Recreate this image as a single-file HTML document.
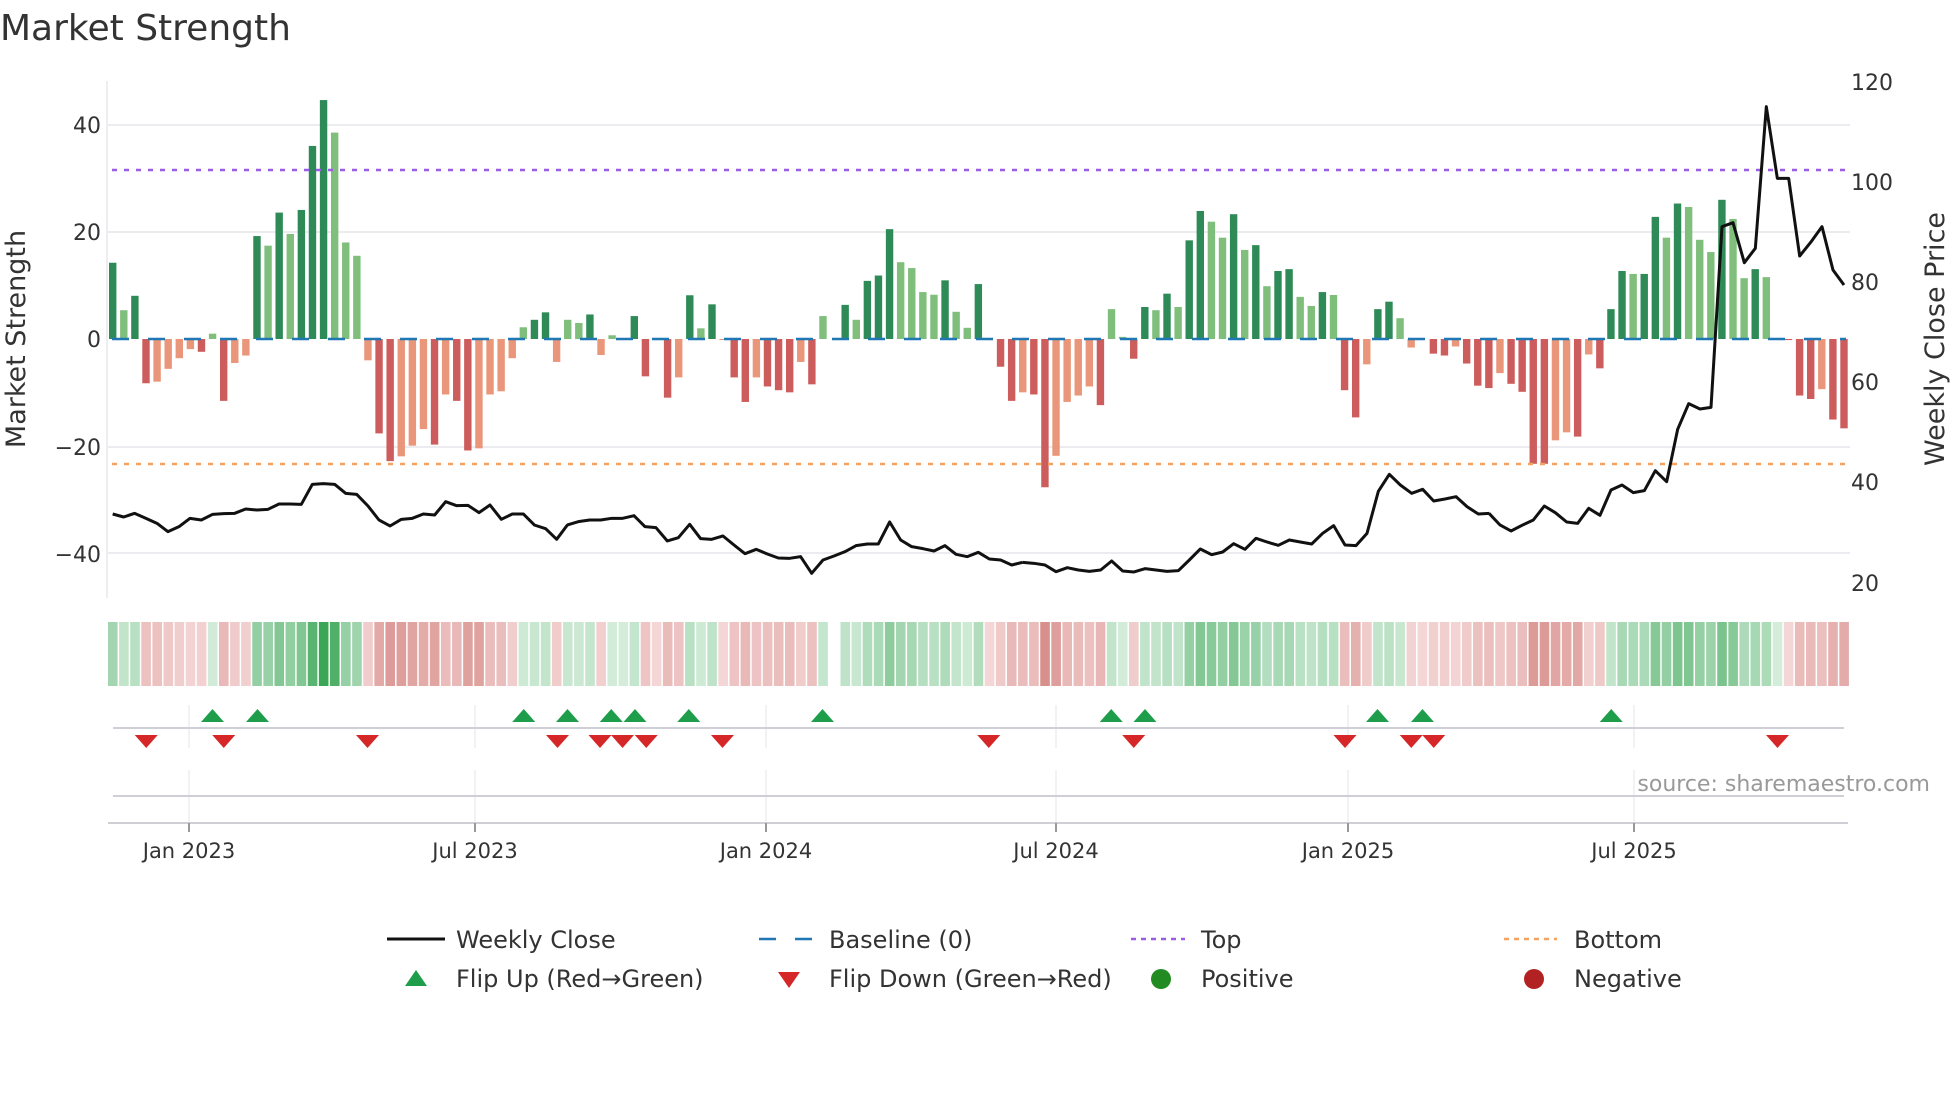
<!DOCTYPE html>
<html><head><meta charset="utf-8">
<style>
html,body{margin:0;padding:0;background:#fff;}
svg{display:block;font-family:"DejaVu Sans","Liberation Sans",sans-serif;}
</style></head>
<body>
<svg id="s" width="1960" height="1102" viewBox="0 0 1960 1102" xmlns="http://www.w3.org/2000/svg">
<rect width="1960" height="1102" fill="#fff"/>
<text x="0" y="40" font-size="36" fill="#333">Market Strength</text>

<g stroke="#ececf0" stroke-width="2">
<line x1="108" y1="125" x2="1850" y2="125"/>
<line x1="108" y1="232" x2="1850" y2="232"/>
<line x1="108" y1="447" x2="1850" y2="447"/>
<line x1="108" y1="553" x2="1850" y2="553"/>
</g>
<line x1="107" y1="81" x2="107" y2="598" stroke="#eeeef2" stroke-width="2"/>

<g font-size="22" fill="#333" text-anchor="end">
<text x="101" y="133">40</text>
<text x="101" y="240">20</text>
<text x="101" y="347">0</text>
<text x="101" y="455">−20</text>
<text x="101" y="562">−40</text>
</g>
<g font-size="22" fill="#333">
<text x="1851" y="90">120</text>
<text x="1851" y="190">100</text>
<text x="1851" y="290">80</text>
<text x="1851" y="390">60</text>
<text x="1851" y="490">40</text>
<text x="1851" y="591">20</text>
</g>
<text transform="translate(25,339) rotate(-90)" font-size="27" fill="#333" text-anchor="middle">Market Strength</text>
<text transform="translate(1944,339) rotate(-90)" font-size="27" fill="#333" text-anchor="middle">Weekly Close Price</text>

<g id="bars"></g>
<line x1="112" y1="339" x2="1846" y2="339" stroke="#1f77b4" stroke-width="2.5" stroke-dasharray="17 19"/>
<line x1="112" y1="170" x2="1846" y2="170" stroke="#9b5de5" stroke-width="2.5" stroke-dasharray="5 7"/>
<line x1="112" y1="464" x2="1846" y2="464" stroke="#f4a261" stroke-width="2.5" stroke-dasharray="5 7"/>

<g fill="none" stroke="#111" stroke-width="3" stroke-linejoin="round">
<polyline vector-effect="non-scaling-stroke" transform="translate(100,80) scale(0.33333)" points="38,1302 71,1311 104,1300 138,1315 171,1330 204,1355 237,1340 270,1315 304,1320 338,1303 371,1301 404,1300 437,1287 471,1290 504,1288 537,1272 570,1272 604,1273 637,1213 670,1211 704,1213 737,1240 770,1243 804,1278 837,1320 870,1338 904,1318 937,1315 970,1302 1004,1305 1037,1265 1070,1277 1104,1276 1137,1298 1170,1275 1204,1318 1237,1302 1270,1302 1303,1335 1337,1346 1370,1378 1403,1334"/>
<polyline vector-effect="non-scaling-stroke" transform="translate(560,80) scale(0.33333)" points="22,1335 55,1325 89,1320 122,1320 155,1315 188,1315 222,1307 255,1340 288,1343 322,1383 355,1373 389,1333 422,1376 455,1378 489,1368 522,1395 555,1421 589,1408 622,1422 655,1434 689,1435 722,1430 755,1480 789,1440 822,1428 855,1415 888,1397 922,1392 955,1392 989,1326 1022,1380 1055,1400 1089,1406 1122,1413 1155,1397 1188,1423 1222,1430 1255,1417 1288,1437 1322,1440 1355,1455 1388,1447"/>
<polyline vector-effect="non-scaling-stroke" transform="translate(1020,80) scale(0.33333)" points="8,1447 42,1450 75,1455 108,1475 142,1463 175,1470 208,1474 242,1470 275,1443 308,1473 342,1476 375,1466 408,1470 441,1474 475,1472 508,1440 541,1407 575,1424 608,1416 641,1391 675,1408 708,1375 741,1386 775,1396 808,1380 841,1386 875,1392 908,1360 941,1337 975,1395 1008,1397 1041,1360 1075,1234 1108,1183 1141,1215 1175,1240 1208,1228 1241,1263 1275,1257 1308,1250 1341,1280 1375,1302 1408,1300"/>
<polyline vector-effect="non-scaling-stroke" transform="translate(1480,80) scale(0.33333)" points="27,1300 60,1335 93,1353 126,1336 160,1320 193,1278 226,1298 260,1326 293,1330 326,1285 360,1306 393,1230 426,1215 460,1238 493,1232 526,1172 560,1205 593,1048 626,971 660,987 693,982 726,440 759,428 793,548 826,505 859,80 892,295 926,295 959,528 992,487 1026,440 1059,570 1092,615"/>
</g>

<g id="heat"></g>

<g stroke="#ececf2" stroke-width="1.5">
<line x1="189" y1="705" x2="189" y2="748"/><line x1="475" y1="705" x2="475" y2="748"/><line x1="766" y1="705" x2="766" y2="748"/><line x1="1056" y1="705" x2="1056" y2="748"/><line x1="1348" y1="705" x2="1348" y2="748"/><line x1="1634" y1="705" x2="1634" y2="748"/>
<line x1="189" y1="770" x2="189" y2="822"/><line x1="475" y1="770" x2="475" y2="822"/><line x1="766" y1="770" x2="766" y2="822"/><line x1="1056" y1="770" x2="1056" y2="822"/><line x1="1348" y1="770" x2="1348" y2="822"/><line x1="1634" y1="770" x2="1634" y2="822"/>
</g>
<line x1="113" y1="728" x2="1844" y2="728" stroke="#cfcfd6" stroke-width="2"/>
<line x1="113" y1="796" x2="1844" y2="796" stroke="#cfcfd6" stroke-width="2"/>
<line x1="108" y1="823" x2="1848" y2="823" stroke="#cfcfd6" stroke-width="2"/>
<g stroke="#999" stroke-width="2">
<line x1="189" y1="823" x2="189" y2="832"/><line x1="475" y1="823" x2="475" y2="832"/><line x1="766" y1="823" x2="766" y2="832"/><line x1="1056" y1="823" x2="1056" y2="832"/><line x1="1348" y1="823" x2="1348" y2="832"/><line x1="1634" y1="823" x2="1634" y2="832"/>
</g>
<g id="marks"></g>
<text x="1930" y="791" font-size="22" fill="#999" text-anchor="end">source: sharemaestro.com</text>

<g font-size="21" fill="#333" text-anchor="middle">
<text x="189" y="858">Jan 2023</text><text x="475" y="858">Jul 2023</text><text x="766" y="858">Jan 2024</text><text x="1056" y="858">Jul 2024</text><text x="1348" y="858">Jan 2025</text><text x="1634" y="858">Jul 2025</text>
</g>

<line x1="387" y1="939" x2="445" y2="939" stroke="#111" stroke-width="3"/>
<line x1="759" y1="939" x2="812" y2="939" stroke="#1f77b4" stroke-width="2.5" stroke-dasharray="17 19"/>
<line x1="1131" y1="939" x2="1185" y2="939" stroke="#9b5de5" stroke-width="2.5" stroke-dasharray="5 5"/>
<line x1="1504" y1="939" x2="1557" y2="939" stroke="#f4a261" stroke-width="2.5" stroke-dasharray="5 5"/>
<polygon points="405,986 427,986 416,970" fill="#1e9e4a"/>
<polygon points="778,972 800,972 789,988" fill="#d62728"/>
<circle cx="1161" cy="979" r="10" fill="#228b22"/>
<circle cx="1534" cy="979" r="10" fill="#b22222"/>
<g font-size="24" fill="#333">
<text x="456" y="948">Weekly Close</text>
<text x="829" y="948">Baseline (0)</text>
<text x="1201" y="948">Top</text>
<text x="1574" y="948">Bottom</text>
<text x="456" y="987">Flip Up (Red→Green)</text>
<text x="829" y="987">Flip Down (Green→Red)</text>
<text x="1201" y="987">Positive</text>
<text x="1574" y="987">Negative</text>
</g>
</svg>
<script>
(function(){
var V=[14.3,5.4,8.1,-8.3,-8,-5.6,-3.6,-1.9,-2.4,1,-11.6,-4.5,-3.1,19.3,17.5,23.7,19.7,24.2,36.2,44.8,38.7,18.1,15.6,-4,-17.7,-22.9,-22,-20,-16.9,-19.8,-10.4,-11.6,-20.9,-20.5,-10.4,-9.8,-3.6,2.2,3.6,5,-4.3,3.6,3,4.6,-3,0.7,0,4.3,-7,0,-11,-7.2,8.2,2,6.5,-0.2,-7.2,-11.8,-7.2,-8.9,-9.6,-10,-4.3,-8.5,4.3,0,6.4,3.6,10.9,11.9,20.6,14.4,13.3,8.8,8.3,11,5.1,2.1,10.3,0,-5.2,-11.6,-10,-10.4,-27.8,-21.9,-11.8,-10.6,-8.9,-12.4,5.6,0.4,-3.7,6,5.4,8.5,6,18.5,24,22,19,23.4,16.7,17.6,9.9,12.75,13.1,7.9,6.2,8.8,8.25,-9.6,-14.7,-4.75,5.6,7,3.9,-1.6,0,-2.75,-3.1,-1.4,-4.6,-8.75,-9.2,-6.4,-8.4,-9.9,-23.4,-23.4,-19,-17.5,-18.3,-2.9,-5.5,5.6,12.75,12.2,12.2,22.9,19,25.4,24.75,18.6,16.3,26.1,22.5,11.4,13.1,11.6,0,-0.2,-10.6,-11.25,-9.4,-15.1,-16.75];
var N=V.length,x0=112.7,x1=1844,dx=(x1-x0)/(N-1),k=16/3,ns="http://www.w3.org/2000/svg";
var bars=document.getElementById('bars'),heat=document.getElementById('heat'),marks=document.getElementById('marks');
function el(t,a,p){var e=document.createElementNS(ns,t);for(var q in a)e.setAttribute(q,a[q]);p.appendChild(e);return e;}
function mix(a,b,t){var r=[];for(var i=0;i<3;i++)r.push(Math.round(a[i]+(b[i]-a[i])*t));return'rgb('+r.join(',')+')';}
for(var i=0;i<N;i++){
 var v=V[i],x=x0+i*dx,p=i?Math.abs(V[i-1]):0,dark=Math.abs(v)>=p;
 if(v!==0){
  var h=Math.abs(v)*k,y=v>0?339-h:339;
  var c=v>0?(dark?'#2e8b57':'#7fbf7b'):(dark?'#cd5c5c':'#e9967a');
  el('rect',{x:x-3.7,y:y,width:7.4,height:h,fill:c},bars);
 }
 if(i===65)continue;
 var vv=v;if(vv===0){vv=(i===46||i===150)?0.3:-0.3;}
 var col=vv>0?mix([212,237,219],[58,166,85],Math.min(vv/45,1)):mix([244,215,215],[216,143,139],Math.min(-vv/28,1));
 el('rect',{x:x-4.7,y:622,width:9.6,height:64,fill:col},heat);
}
var up=[170,206,419,454,489,508,551,658,889,916,1102,1138,1289];
var dn=[117,179,294,446,480,498,517,578,791,907,1076,1129,1147,1422];
up.forEach(function(d){var x=d*1.25;el('polygon',{points:(x-11.5)+',722 '+(x+11.5)+',722 '+x+',709',fill:'#1e9e4a'},marks);});
dn.forEach(function(d){var x=d*1.25;el('polygon',{points:(x-11.5)+',735 '+(x+11.5)+',735 '+x+',748',fill:'#d62728'},marks);});
})();
</script>
</body></html>
